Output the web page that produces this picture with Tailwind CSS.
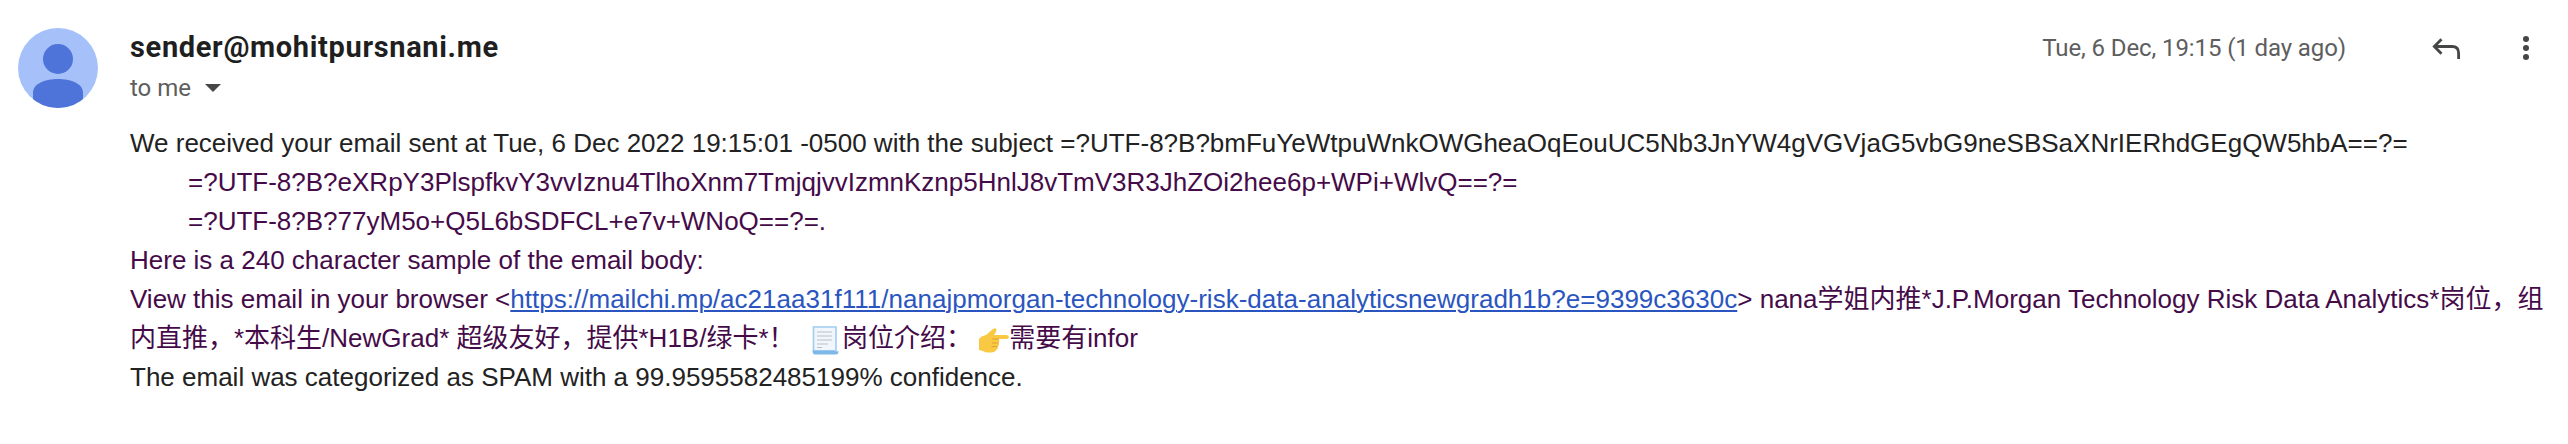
<!DOCTYPE html>
<html lang="en">
<head>
<meta charset="utf-8">
<title>Email message</title>
<script src="https://cdn.jsdelivr.net/npm/@tailwindcss/browser@4"></script>
</head>
<body class="bg-white w-[2568px] h-[444px] overflow-hidden font-['Liberation_Sans','Noto_Sans_CJK_SC',sans-serif]">
<article class="flex pl-[18px] pt-7 gap-8">
  <svg class="size-20 shrink-0" viewBox="0 0 80 80">
    <clipPath id="c"><circle cx="40" cy="40" r="40"/></clipPath>
    <g clip-path="url(#c)">
      <rect width="80" height="80" fill="#a6c1fa"/>
      <circle cx="40" cy="31" r="15" fill="#4e73d9"/>
      <path d="M15 80V65C15 55 28 51 40 51S65 55 65 65V80Z" fill="#4e73d9"/>
    </g>
  </svg>
  <div class="flex-1">
    <header class="flex justify-between h-24">
      <div>
        <div class="h-10 leading-[39px] text-[29px] tracking-[0.66px] font-bold text-[#1f1f1f] font-[Roboto,sans-serif] whitespace-nowrap">sender@mohitpursnani.me</div>
        <div class="flex items-center h-10 gap-[14px] text-2xl text-[#5e5e5e] font-[Roboto,sans-serif]"><span>to me</span>
          <svg class="w-4 h-2" viewBox="0 0 16 8"><path d="M0 0H16L8 8Z" fill="#444746"/></svg>
        </div>
      </div>
      <div class="flex h-10 items-center text-2xl text-[#5e5e5e] font-[Roboto,sans-serif]">
        <span class="tracking-[-0.1px]">Tue, 6 Dec, 19:15 (1 day ago)</span>
        <svg class="ml-[85px] w-8 h-6" viewBox="0 0 32 24" fill="none" stroke="#444746" stroke-width="2.8"><path d="M10.500 3.200L3.300 10.500L10.500 17.800M3.300 10.500H21Q27.600 10.500 27.600 17V23"/></svg>
        <svg class="ml-[60px] mr-[39px] w-1.5 h-6" viewBox="0 0 6 24" fill="#444746"><circle cx="3" cy="3" r="3"/><circle cx="3" cy="12" r="3"/><circle cx="3" cy="21" r="3"/></svg>
      </div>
    </header>
    <div class="text-[26px] leading-[39px] text-[#450b49] [&>p]:whitespace-pre [&>p]:h-[39px]">
      <p class="text-[#222]">We received your email sent at Tue, 6 Dec 2022 19:15:01 -0500 with the subject =?UTF-8?B?bmFuYeWtpuWnkOWGheaOqEouUC5Nb3JnYW4gVGVjaG5vbG9neSBSaXNrIERhdGEgQW5hbA==?=</p>
      <p class="pl-[58px]">=?UTF-8?B?eXRpY3PlspfkvY3vvIznu4TlhoXnm7TmjqjvvIzmnKznp5HnlJ8vTmV3R3JhZOi2hee6p+WPi+WlvQ==?=</p>
      <p class="pl-[58px]">=?UTF-8?B?77yM5o+Q5L6bSDFCL+e7v+WNoQ==?=.</p>
      <p>Here is a 240 character sample of the email body:</p>
      <p>View this email in your browser &lt;<a class="text-[#2a55c0] underline decoration-2 underline-offset-2 tracking-[0.016px]" href="#">https://mailchi.mp/ac21aa31f111/nanajpmorgan-technology-risk-data-analyticsnewgradh1b?e=9399c3630c</a>&gt; nana学姐内推*J.P.Morgan Technology Risk Data Analytics*岗位，组</p>
      <p>内直推，*本科生/NewGrad* 超级友好，提供*H1B/绿卡*！  <svg class="inline-block align-[-8px] ml-px w-8 h-[30px]" viewBox="-1 0 32 30"><path d="M2.500 2H25V26H2.500Z" fill="#f0f6fb" stroke="#9fcdf0" stroke-width="1.6"/><path d="M1.500 25.500H23Q25 27 27.500 26Q27.500 29.500 25 29.500H4Q1.500 29.500 1.500 25.500Z" fill="#7db8e8"/><path d="M6 7H21M6 11H21M6 15H21M6 19H17M6 22.500H11" stroke="#b9bfc6" stroke-width="1.1"/></svg>岗位介绍： <svg class="inline-block align-[-8px] w-[30px] h-[30px]" viewBox="0 0 30 30"><path d="M0 14Q2 11 7 10L14 4Q17 2 17.500 5Q17.500 7 15 10H27.500Q30 10.500 30 12Q30 14 27.500 14H19.500Q21.500 16 19.500 18Q21 20 18.500 21.500Q19.500 24 17 25Q16 27.500 12 27.500Q6 28 4 26L0 25Z" fill="#f9c944"/><path d="M13 14H20M13 18H19.500M12.500 21.600H18.500" stroke="#e0a02d" stroke-width="1" fill="none"/></svg>需要有infor</p>
      <p class="text-[#222]">The email was categorized as SPAM with a 99.9595582485199% confidence.</p>
    </div>
  </div>
</article>
</body>
</html>
